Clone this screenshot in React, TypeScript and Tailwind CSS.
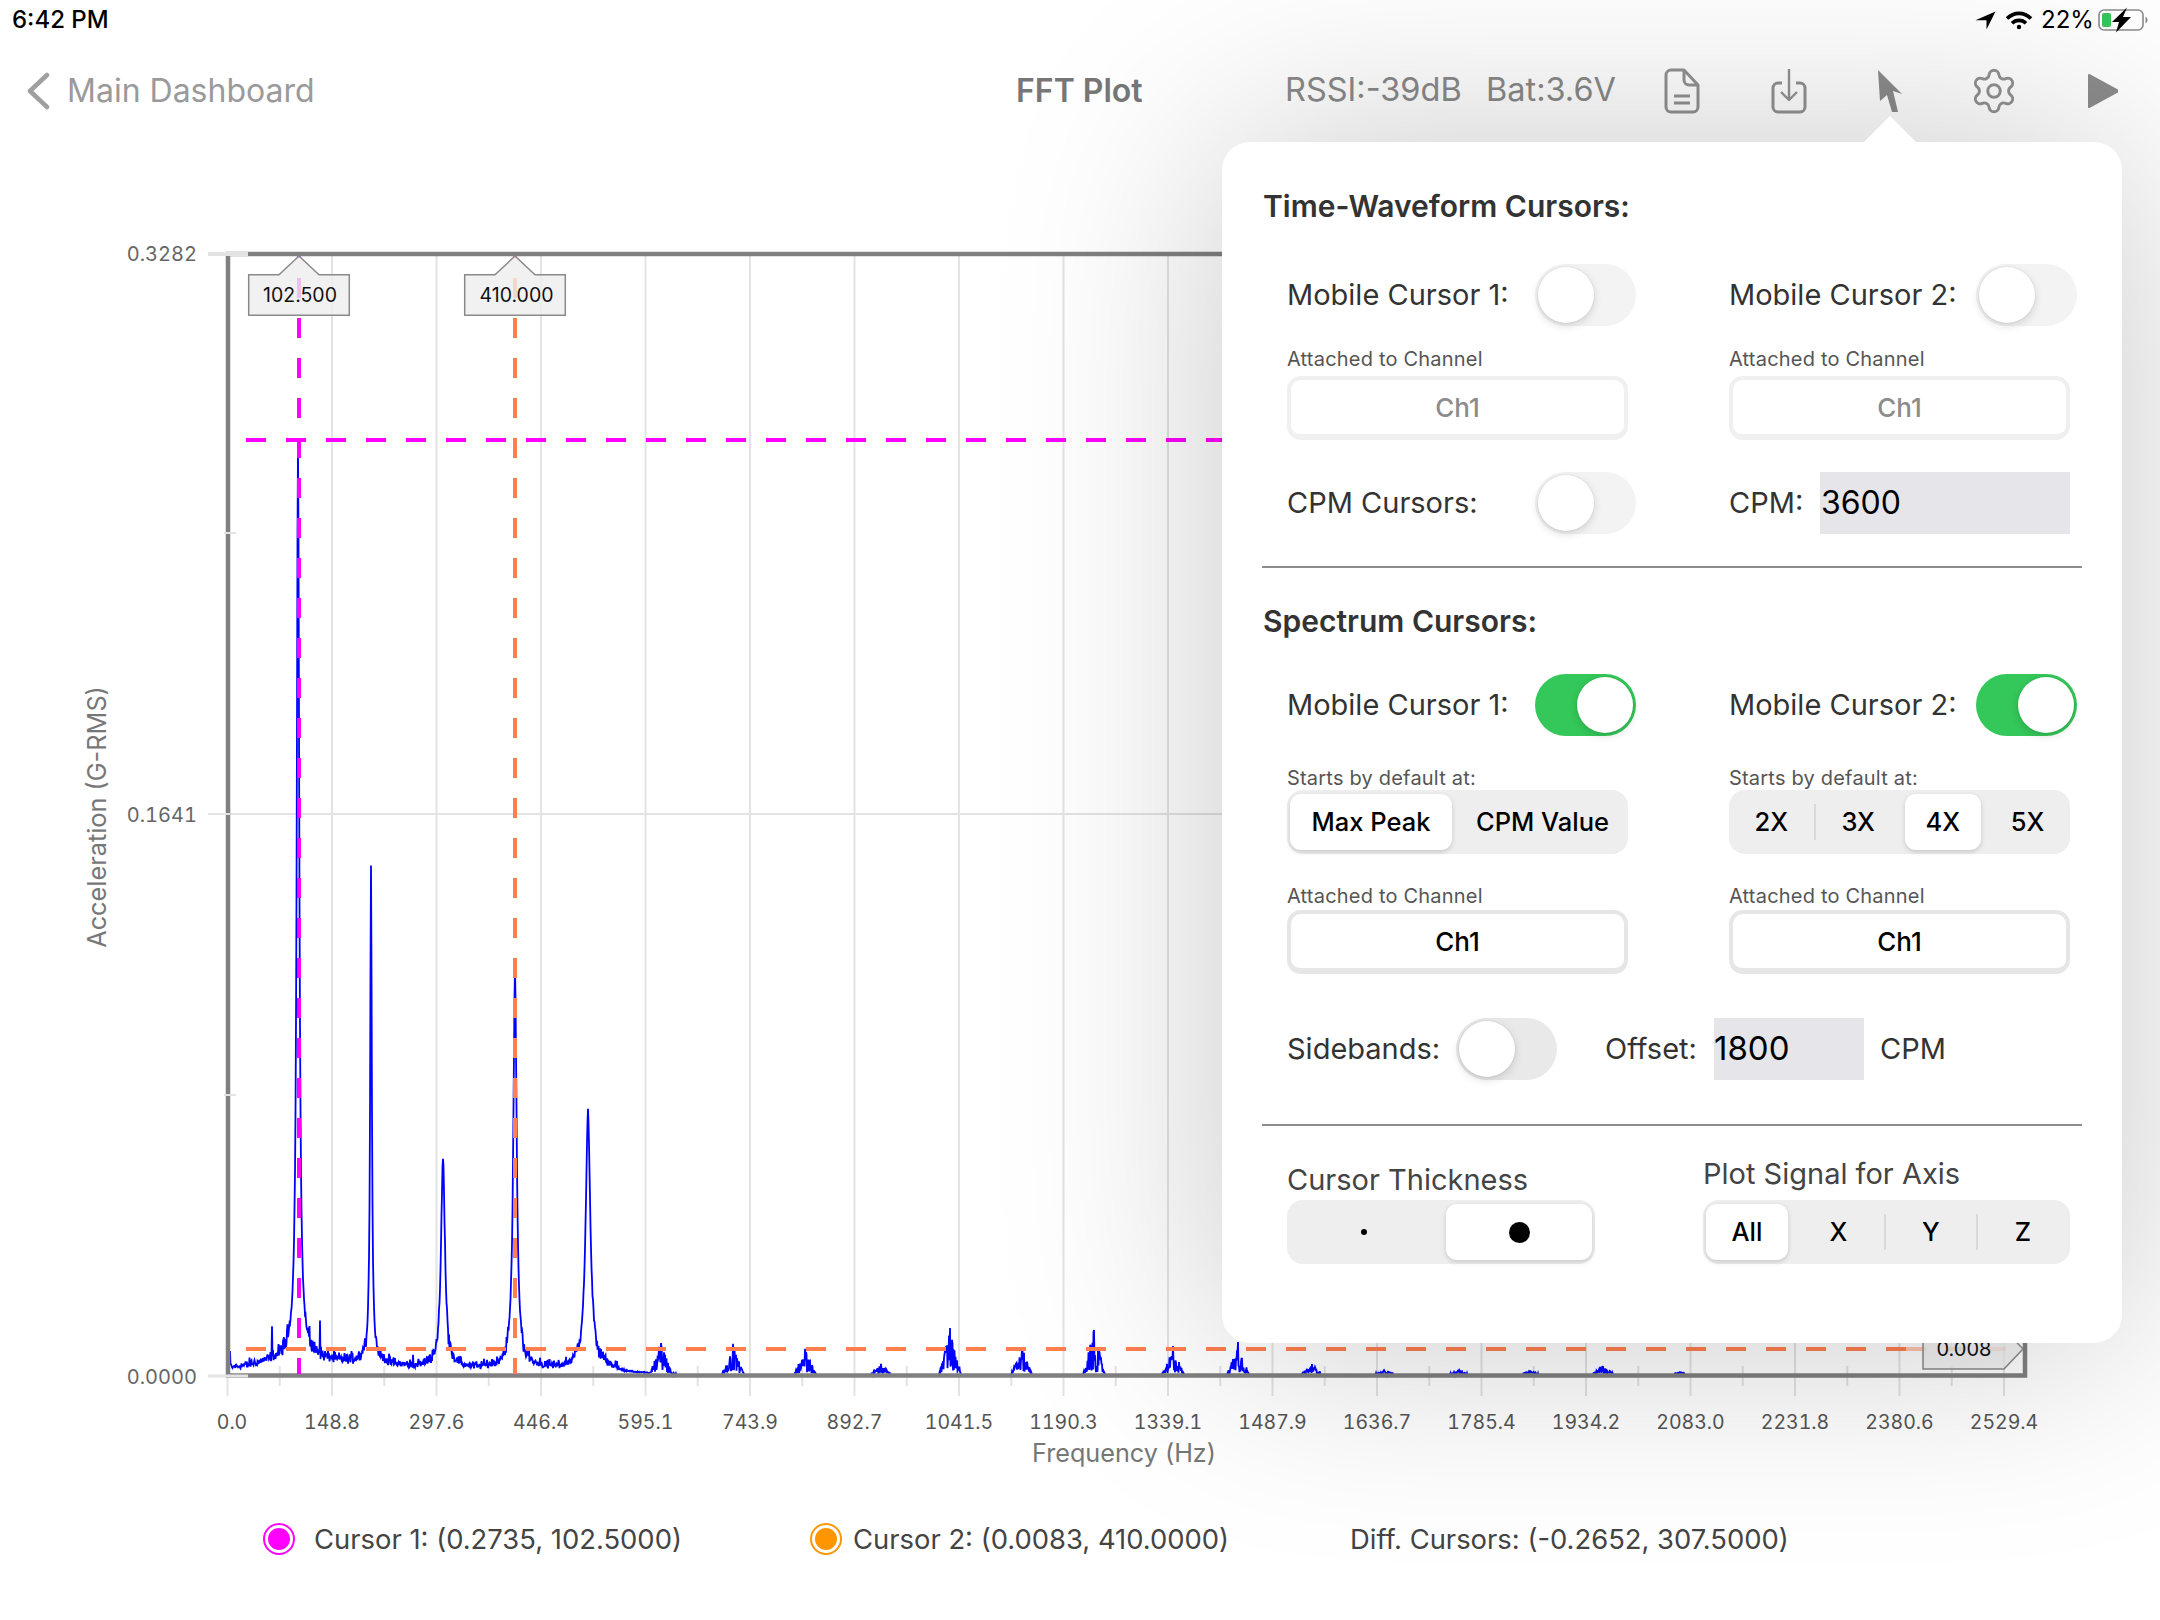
import { Settings } from "lucide-react";

const labels = ["0.0","148.8","297.6","446.4","595.1","743.9","892.7","1041.5","1190.3","1339.1","1487.9","1636.7","1785.4","1934.2","2083.0","2231.8","2380.6","2529.4"];
const tick = (i: number) => 227.5 + i * 104.5;

function makeWave() {
  let s = 12345;
  const rnd = () => { s = (s * 1103515245 + 12345) & 0x7fffffff; return s / 0x7fffffff; };
  const big = [[298, 905, 1.5, 0], [371, 485, 1, 12], [443, 203, 2.3, 8], [515, 388, 2, 10], [588, 247, 2.8, 10]];
  const small = [[661,30],[733,30],[805,25],[881,10],[950,46],[1022,26],[1094,44],[1173,28],[1238,32],[1312,10],[1384,4],[1459,4],[1530,3],[1603,8],[1680,2]];
  const spikes: Record<number, number> = { 230: 16, 272: 28, 320: 38, 413: 10, 492: 6, 540: 8 };
  const pts: string[] = [];
  for (let x = 230; x <= 2022; x += 0.5) {
    let h = 0;
    for (const [c, a, w, t] of big) {
      const d = (x - c) / w;
      h += a / (1 + d * d);
      if (t) h += t * Math.exp(-Math.abs(x - c) / 22);
    }
    h += 22 * Math.exp(-Math.abs(x - 298) / 42);
    if (h < 40) h *= 0.75 + 0.5 * rnd();
    if (x < 620) h += rnd() * rnd() * 9;
    for (const [c, a] of small) {
      const d = Math.abs(x - c);
      if (d === 0) h += a;
      else if (d < 11) h += a * (1 - d / 11) * (0.05 + 0.95 * rnd());
    }
    if (spikes[x]) h += spikes[x];
    const y = h < 0.6 ? 1375 : 1374 - h;
    pts.push(`${x},${y.toFixed(1)}`);
  }
  return pts.join(" ");
}
const wave = makeWave();

function Chart() {
  const minor = Array.from({ length: 17 }, (_, i) => tick(i) + 52.25);
  return (
    <svg className="block h-[1358px] w-[2160px]" viewBox="0 142 2160 1358">
      {labels.map((_, i) => (
        <line key={i} x1={tick(i)} x2={tick(i)} y1={i === 0 ? 1366 : 256} y2={1396} stroke="#e3e3e3" strokeWidth={2} />
      ))}
      {minor.map((x, i) => (
        <line key={i} x1={x} x2={x} y1={1366} y2={1386} stroke="#e3e3e3" strokeWidth={2} />
      ))}
      <line x1={230} x2={2024} y1={814} y2={814} stroke="#e3e3e3" strokeWidth={2} />
      <polyline points={wave} fill="none" stroke="#0000ff" strokeWidth={1.8} />
      <path d="M228 1375.5V254H2025V1375.5Z" fill="none" stroke="#808080" strokeWidth={4.5} />
      <line x1={208} x2={248} y1={254} y2={254} stroke="#e3e3e3" strokeWidth={4} />
      <line x1={208} x2={248} y1={1376} y2={1376} stroke="#e3e3e3" strokeWidth={3} />
      <line x1={208} x2={230} y1={814} y2={814} stroke="#e3e3e3" strokeWidth={2} />
      <line x1={224} x2={236} y1={533} y2={533} stroke="#e3e3e3" strokeWidth={2} />
      <line x1={224} x2={236} y1={1095} y2={1095} stroke="#e3e3e3" strokeWidth={2} />
      <line x1={299} x2={299} y1={256} y2={1374} stroke="#ff00ff" strokeWidth={4} strokeDasharray="20 20" strokeDashoffset={18} />
      <line x1={515} x2={515} y1={256} y2={1374} stroke="#ff7f50" strokeWidth={4} strokeDasharray="20 20" strokeDashoffset={18} />
      <line x1={246} x2={2024} y1={440} y2={440} stroke="#ff00ff" strokeWidth={4} strokeDasharray="20 20" />
      <line x1={246} x2={1906} y1={1349} y2={1349} stroke="#ff7f50" strokeWidth={4} strokeDasharray="20 20" />
      <path d="M248.7 274.7H279L299 256L319 274.7H349.3V315.3H248.7Z" fill="#ededed" fillOpacity={0.8} stroke="#8a8a8a" strokeWidth={1.5} />
      <text x={300} y={302} textAnchor="middle" fontSize={19.5} fill="#111">102.500</text>
      <path d="M464.7 274.7H495L515 256L535 274.7H565.3V315.3H464.7Z" fill="#ededed" fillOpacity={0.8} stroke="#8a8a8a" strokeWidth={1.5} />
      <text x={516.5} y={302} textAnchor="middle" fontSize={19.5} fill="#111">410.000</text>
      <line x1={1906} x2={2024} y1={1349} y2={1349} stroke="#ff7f50" strokeWidth={4} strokeDasharray="20 20" strokeOpacity={0.45} />
      <path d="M1923 1329H2004L2023 1349L2004 1369H1923Z" fill="#ededed" fillOpacity={0.75} stroke="#8a8a8a" strokeWidth={1.5} />
      <text x={1964} y={1356} textAnchor="middle" fontSize={20} fill="#111">0.008</text>
      {([["0.3282", 261], ["0.1641", 822], ["0.0000", 1384]] as [string, number][]).map(([t, y]) => (
        <text key={t} className="tabular-nums" x={197} y={y} textAnchor="end" fontSize={20} fill="#666666">{t}</text>
      ))}
      {labels.map((t, i) => (
        <text key={t} className="tabular-nums" x={i === 0 ? 232 : tick(i)} y={1429} textAnchor="middle" fontSize={19.5} fill="#555555">{t}</text>
      ))}
      <text x={1124} y={1462} textAnchor="middle" fontSize={25.2} fill="#777777">Frequency (Hz)</text>
      <text transform="translate(106 817) rotate(-90)" textAnchor="middle" fontSize={25.3} fill="#777777">Acceleration (G-RMS)</text>
    </svg>
  );
}

function Toggle({ on = false, track = "bg-[#f3f3f3]" }: { on?: boolean; track?: string }) {
  return (
    <div className={`flex h-[62px] w-[101px] items-center rounded-full p-[3px] ${on ? "justify-end bg-[#34c759]" : track}`}>
      <div className="h-[56px] w-[56px] rounded-full bg-white shadow-[0_3px_8px_rgba(0,0,0,0.14),0_0_0_1px_rgba(0,0,0,0.04)]" />
    </div>
  );
}

function ChannelButton({ active = false }: { active?: boolean }) {
  return (
    <div className={`flex h-[64px] w-[341px] items-center justify-center rounded-[14px] border-[4px] border-b-[6px] bg-white text-[26px] font-medium ${active ? "border-[#e6e6e6] text-black" : "border-[#f0f0f0] text-[#8c8c8c]"}`}>
      Ch1
    </div>
  );
}

const selected = "flex h-[56px] items-center justify-center rounded-[11px] bg-white shadow-[0_2px_5px_rgba(0,0,0,0.16)]";
const plain = "flex h-[56px] items-center justify-center";
const sep = "h-[36px] w-[2px] shrink-0 bg-[#d9d9d9]";

function Label({ children }: { children: string }) {
  return <div className="flex h-[24px] items-center pt-[1px] text-[20px] tracking-[0.2px] text-[#555555]">{children}</div>;
}

function Popover() {
  return (
    <div className="absolute left-[1222px] top-[142px] h-[1201px] w-[900px] rounded-[28px] bg-white pt-[43px] text-[#333333] shadow-[0_0_220px_rgba(0,0,0,0.22)]">
      <div className="absolute left-[642px] top-[-26px] h-0 w-0 border-x-[26px] border-b-[26px] border-x-transparent border-b-white" />
      <div className="ml-[41px] flex h-[40px] items-center pt-[2px] text-[30px] font-semibold">Time-Waveform Cursors:</div>

      <div className="ml-[65px] mt-[39px] grid grid-cols-[442px_1fr] text-[29px]">
        <div className="flex items-center"><span className="w-[248px]">Mobile Cursor 1:</span><Toggle /></div>
        <div className="flex items-center"><span className="w-[247px]">Mobile Cursor 2:</span><Toggle /></div>
        <div className="mt-[20px]"><Label>Attached to Channel</Label></div>
        <div className="mt-[20px]"><Label>Attached to Channel</Label></div>
        <div className="mt-[6px]"><ChannelButton /></div>
        <div className="mt-[6px]"><ChannelButton /></div>
        <div className="mt-[32px] flex items-center"><span className="w-[248px]">CPM Cursors:</span><Toggle /></div>
        <div className="mt-[32px] flex items-center">
          <span className="w-[91px]">CPM:</span>
          <div className="flex h-[62px] w-[250px] items-center bg-[#e5e5ea] pl-[1px] text-[32px] text-black">3600</div>
        </div>
      </div>

      <div className="ml-[40px] mt-[32px] h-[2px] w-[820px] bg-[#8c8c8c]" />
      <div className="ml-[41px] mt-[32px] flex h-[40px] items-center pt-[2px] text-[30px] font-semibold">Spectrum Cursors:</div>

      <div className="ml-[65px] mt-[34px] grid grid-cols-[442px_1fr] text-[29px]">
        <div className="flex items-center"><span className="w-[248px]">Mobile Cursor 1:</span><Toggle on /></div>
        <div className="flex items-center"><span className="w-[247px]">Mobile Cursor 2:</span><Toggle on /></div>
        <div className="mt-[29px]"><Label>Starts by default at:</Label></div>
        <div className="mt-[29px]"><Label>Starts by default at:</Label></div>
        <div className="mt-px flex h-[64px] w-[341px] items-center rounded-[16px] bg-[#eeeeef] px-[3px] text-[25.5px] font-medium text-black">
          <div className={`${selected} w-[162px]`}>Max Peak</div>
          <div className={`${plain} flex-1 pl-[8px]`}>CPM Value</div>
        </div>
        <div className="mt-px flex h-[64px] w-[341px] items-center rounded-[16px] bg-[#eeeeef] text-[25.5px] font-medium text-black">
          <div className={`${plain} flex-1`}>2X</div>
          <div className={sep} />
          <div className={`${plain} flex-1`}>3X</div>
          <div className="flex flex-1 justify-center"><div className={`${selected} w-[76px]`}>4X</div></div>
          <div className={`${plain} flex-1`}>5X</div>
        </div>
        <div className="mt-[29px]"><Label>Attached to Channel</Label></div>
        <div className="mt-[29px]"><Label>Attached to Channel</Label></div>
        <div className="mt-[3px]"><ChannelButton active /></div>
        <div className="mt-[3px]"><ChannelButton active /></div>
      </div>

      <div className="ml-[65px] mt-[44px] flex h-[62px] items-center text-[29px]">
        <span className="w-[169px]">Sidebands:</span>
        <Toggle track="bg-[#e9e9ea]" />
        <span className="ml-[48px] w-[109px]">Offset:</span>
        <div className="flex h-[62px] w-[150px] items-center bg-[#e5e5ea] text-[33px] text-black">1800</div>
        <span className="ml-[16px]">CPM</span>
      </div>

      <div className="ml-[40px] mt-[44px] h-[2px] w-[820px] bg-[#8c8c8c]" />

      <div className="ml-[65px] mt-[28px] flex text-[29px] text-[#444444]">
        <div className="w-[416px]">
          <div className="mt-[6px] flex h-[40px] items-center">Cursor Thickness</div>
          <div className="flex h-[64px] w-[308px] items-center rounded-[16px] bg-[#eeeeef] pr-[3px]">
            <div className={`${plain} w-[159px] pr-[6px]`}><div className="h-[6px] w-[6px] rounded-full bg-black" /></div>
            <div className={`${selected} w-[146px]`}><div className="h-[21px] w-[21px] rounded-full bg-black" /></div>
          </div>
        </div>
        <div className="w-[367px]">
          <div className="flex h-[40px] items-center">Plot Signal for Axis</div>
          <div className="mt-[6px] flex h-[64px] items-center rounded-[16px] bg-[#eeeeef] pl-[3px] text-[25.5px] font-medium text-black">
            <div className={`${selected} w-[82px]`}>All</div>
            <div className={`${plain} ml-[5px] w-[91px]`}>X</div>
            <div className={sep} />
            <div className={`${plain} w-[90px]`}>Y</div>
            <div className={sep} />
            <div className={`${plain} w-[90px]`}>Z</div>
          </div>
        </div>
      </div>
    </div>
  );
}

function StatusIcons() {
  return (
    <div className="flex items-center text-[24px] text-black">
      <svg width="21" height="19" viewBox="0 0 21 19"><path d="M20.5 0.5L11.5 18.5V9.2L0.5 9.2Z" fill="#000" /></svg>
      <svg className="ml-[9px]" width="28" height="19" viewBox="0 0 28 19" fill="none" stroke="#000" strokeWidth="3.6">
        <path d="M2 7.6C9 0.6 19 0.6 26 7.6" /><path d="M7 12.2C11 8.4 17 8.4 21 12.2" /><circle cx="14" cy="16" r="2.2" fill="#000" stroke="none" />
      </svg>
      <span className="ml-[8px] w-[57px]">22%</span>
      <svg width="50" height="26" viewBox="0 0 50 26">
        <rect x="1" y="3" width="44" height="20" rx="5" fill="none" stroke="#8a8a8a" strokeWidth="1.6" />
        <rect x="4" y="6" width="9" height="14" rx="2" fill="#34c759" />
        <path d="M47.5 9.5a4 4 0 0 1 0 7Z" fill="#8a8a8a" />
        <path d="M29 0.5L14 15H21L18 25.5L33 10H25Z" fill="#000" />
      </svg>
    </div>
  );
}

function Legend({ dot, ring, className, children }: { dot: string; ring: string; className: string; children: string }) {
  return (
    <div className={`flex h-[32px] items-center text-[27.4px] text-[#444444] ${className}`}>
      <div className={`flex h-[32px] w-[32px] items-center justify-center rounded-full border-[2px] bg-white ${ring}`}>
        <div className={`h-[22px] w-[22px] rounded-full ${dot}`} />
      </div>
      <span className="whitespace-nowrap pt-[2px]">{children}</span>
    </div>
  );
}

export default function App() {
  return (
    <div className="relative h-[1620px] w-[2160px] overflow-hidden bg-white font-[family-name:Inter,sans-serif]">
      <div className="flex h-[38px] items-center justify-between px-[12px] pt-[2px]">
        <span className="text-[24px] font-medium text-black">6:42 PM</span>
        <StatusIcons />
      </div>

      <div className="flex h-[104px] items-center whitespace-nowrap pt-[1px] text-[32px] text-[#9a9a9a]">
        <svg className="ml-[26px] shrink-0" width="24" height="38" viewBox="0 0 24 38" fill="none" stroke="#9f9f9f" strokeWidth="4.5" strokeLinecap="round" strokeLinejoin="round">
          <path d="M21 3L4 19L21 35" />
        </svg>
        <span className="ml-[17px] w-[247px]">Main Dashboard</span>
        <span className="ml-[702px] w-[129px] font-semibold text-[#777777]">FFT Plot</span>
        <span className="ml-[140px] w-[176px] text-[32.5px] text-[#8a8a8a]">RSSI:-39dB</span>
        <span className="ml-[25px] w-[128px] text-[32.5px] text-[#8a8a8a]">Bat:3.6V</span>
        <svg className="ml-[50px] shrink-0" width="36" height="46" viewBox="0 0 36 46" fill="none" stroke="#929292" strokeWidth="3" strokeLinejoin="round">
          <path d="M2 7a5 5 0 0 1 5-5h13l14 15v22a5 5 0 0 1-5 5H7a5 5 0 0 1-5-5Z" />
          <path d="M20 2v10a5 5 0 0 0 5 5h9" />
          <path d="M10 28h16M10 35h16" />
        </svg>
        <svg className="ml-[71px] shrink-0" width="36" height="46" viewBox="0 0 36 46" fill="none" stroke="#929292" strokeWidth="3" strokeLinejoin="round">
          <path d="M11 15H7a5 5 0 0 0-5 5v19a5 5 0 0 0 5 5h22a5 5 0 0 0 5-5V20a5 5 0 0 0-5-5h-4" />
          <path strokeWidth="2.4" d="M18 1v31M10 24l8 8 8-8" />
        </svg>
        <svg className="ml-[70px] shrink-0" width="26" height="44" viewBox="0 0 26 44">
          <path d="M1 1L25 25L16 22L21 43L15 43L10 26L3 32Z" fill="#8c8c8c" />
        </svg>
        <Settings className="ml-[66px] shrink-0" size={50} strokeWidth={1.4} color="#929292" />
        <svg className="ml-[68px] shrink-0" width="31" height="36" viewBox="0 0 31 36"><path d="M2 2L29.5 17a1 1 0 0 1 0 2L2 34Z" fill="#8c8c8c" stroke="#8c8c8c" strokeWidth="2" strokeLinejoin="round" /></svg>
      </div>

      <Chart />

      <div className="flex h-[120px] items-start pt-[23px]">
        <Legend className="ml-[263px] w-[547px] gap-[19px]" dot="bg-[#ff00ff]" ring="border-[#ff00ff]">Cursor 1: (0.2735, 102.5000)</Legend>
        <Legend className="w-[540px] gap-[11px]" dot="bg-[#ff9500]" ring="border-[#ff9500]">Cursor 2: (0.0083, 410.0000)</Legend>
        <span className="whitespace-nowrap text-[27.4px] leading-[32px] text-[#444444]">Diff. Cursors: (-0.2652, 307.5000)</span>
      </div>

      <Popover />
    </div>
  );
}
